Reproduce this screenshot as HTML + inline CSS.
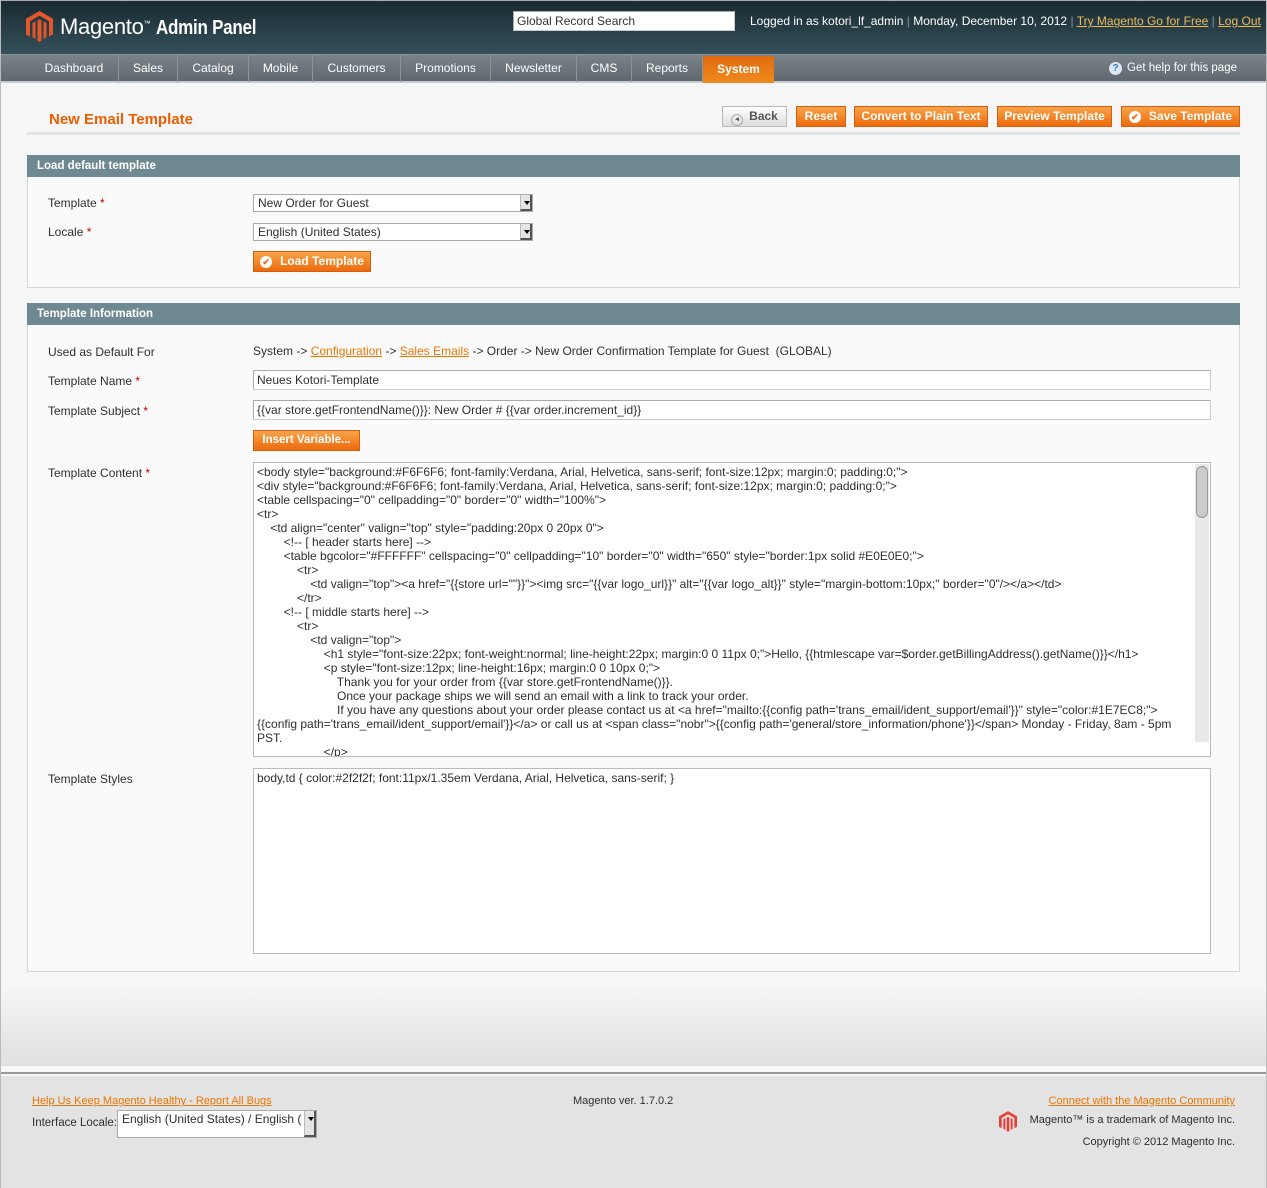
<!DOCTYPE html>
<html><head><meta charset="utf-8"><style>
*{margin:0;padding:0;box-sizing:border-box}
body{width:1267px;height:1188px;position:relative;background:#f6f6f6;font-family:"Liberation Sans",Arial,sans-serif;font-size:12px;color:#2f2f2f;overflow:hidden}
.a{position:absolute}
#hdr{left:0;top:0;width:1267px;height:54px;background:linear-gradient(#1a2a31,#34505a);border-top:1px solid #aab}
#nav{left:0;top:54px;width:1267px;height:29px;background:linear-gradient(#7a8389,#5f686e);border-top:1px solid #8a9499;border-bottom:2px solid #c7cbcd}
#nav span{position:absolute;top:0;height:27px;line-height:27px;color:#fff;font-size:12px;border-right:1px solid #8b9499;text-align:center}
.btn{position:absolute;top:106px;height:21px;background:linear-gradient(#f8a34a,#ec6a0c);border:1px solid #d25e10;color:#fff;font-weight:bold;font-size:12px;line-height:19px;text-align:center}
.sh{left:27px;width:1213px;height:22px;background:#6f8992;color:#fff;font-weight:bold;font-size:11.5px;line-height:22px;padding-left:10px}
.box{left:27px;width:1213px;border:1px solid #d6d6d6;border-top:none;background:#fafafa}
.lbl{left:48px;font-size:12px}
.req{color:#c00}
.inp{background:#fff;border:1px solid #aaa;border-right-color:#ccc;border-bottom-color:#ccc;font-size:12px;padding-left:3px;line-height:16px}
.sel{background:#fff;border:1px solid #aaa;font-size:12px;padding-left:4px;line-height:16px;height:18px}
.sel i{position:absolute;right:0;top:0;width:12px;height:16px;background:#e4e4e4;border-left:1px solid #bbb;border-right:2px solid #555;border-bottom:2px solid #555}
.sel i:after{content:"";position:absolute;left:3px;top:6px;border:3px solid transparent;border-top:4px solid #000}
.ta{background:#fff;border:1px solid #bbb;font-size:12px;line-height:14px;padding:2px 3px;white-space:pre;overflow:hidden}
a{color:#ea7601;text-decoration:underline}
#lb{left:0;top:0;width:1px;height:1188px;background:#bbb}
#rb{right:0;top:0;width:1px;height:1188px;background:#bbb}
</style></head><body>
<div id="hdr" class="a">
<svg class="a" style="left:26px;top:10px" width="27" height="31" viewBox="0 0 27 31"><path d="M13.5 0L27 7.8V23.4L23 25.7V10.2L13.5 4.7 4 10.2V25.7L0 23.4V7.8Z" fill="#e4572a"/><path d="M11.5 9.5L13.5 8.3 15.5 9.5V29.5L13.5 31 11.5 29.5ZM6.5 12L9.5 10.3V28L6.5 26.3ZM17.5 10.3L20.5 12V26.3L17.5 28Z" fill="#e4572a"/></svg>
<div class="a" style="left:60px;top:13px;color:#fff;font-size:22px;letter-spacing:-0.3px;white-space:nowrap">Magento<sup style="font-size:7px">™</sup> <span style="display:inline-block;font-size:20px;font-family:'Liberation Sans Narrow','Liberation Sans',sans-serif;font-weight:bold;transform:scaleX(0.85);transform-origin:left">Admin Panel</span></div>
<div class="a inp" style="left:513px;top:10px;width:222px;height:20px;line-height:18px;font-size:12px;color:#333">Global Record Search</div>
<div class="a" style="left:750px;top:13px;color:#fff;font-size:12px;white-space:nowrap">Logged in as kotori_lf_admin <span style="color:#7f939a">|</span> Monday, December 10, 2012 <span style="color:#7f939a">|</span> <a style="color:#ebbb5c">Try Magento Go for Free</a> <span style="color:#7f939a">|</span> <a style="color:#ebbb5c">Log Out</a></div>
</div>
<div id="nav" class="a">
<span style="left:30px;width:89px">Dashboard</span>
<span style="left:119px;width:59px">Sales</span>
<span style="left:178px;width:71px">Catalog</span>
<span style="left:249px;width:64px">Mobile</span>
<span style="left:313px;width:88px">Customers</span>
<span style="left:401px;width:90px">Promotions</span>
<span style="left:491px;width:86px">Newsletter</span>
<span style="left:577px;width:55px">CMS</span>
<span style="left:632px;width:71px">Reports</span>
<span style="left:703px;width:71px;background:linear-gradient(#e06a10,#f08a1c);font-weight:bold;border-right:none;top:1px">System</span>
<span style="left:1090px;width:147px;border:none;text-align:right;font-size:11.5px"><b style="display:inline-block;width:13px;height:13px;border-radius:50%;background:#dde8f6;color:#3b78c4;font-size:10px;line-height:13px;text-align:center;margin-right:5px">?</b>Get help for this page</span>
</div>
<div class="a" style="left:49px;top:111px;color:#eb5e00;font-size:15px;font-weight:bold">New Email Template</div>
<div class="a" style="left:27px;top:132px;width:1213px;height:3px;background:#e4e4e4"></div>
<div class="btn" style="left:722px;width:65px;background:linear-gradient(#fff,#ddd);border-color:#bbb;color:#555"><span style="display:inline-block;width:12px;height:12px;border-radius:50%;border:1px solid #aaa;font-size:7px;line-height:10px;vertical-align:-1px;margin-right:6px">◂</span>Back</div>
<div class="btn" style="left:796px;width:50px">Reset</div>
<div class="btn" style="left:854px;width:134px">Convert to Plain Text</div>
<div class="btn" style="left:997px;width:115px">Preview Template</div>
<div class="btn" style="left:1121px;width:119px"><span style="display:inline-block;width:12px;height:12px;border-radius:50%;background:#fff;color:#ec6a0c;font-size:9px;line-height:12px;margin-right:8px">✔</span>Save Template</div>

<div class="a sh" style="top:155px">Load default template</div>
<div class="a box" style="top:177px;height:111px"></div>
<div class="a lbl" style="top:196px">Template <span class="req">*</span></div>
<div class="a sel" style="left:253px;top:194px;width:280px">New Order for Guest<i></i></div>
<div class="a lbl" style="top:225px">Locale <span class="req">*</span></div>
<div class="a sel" style="left:253px;top:223px;width:280px">English (United States)<i></i></div>
<div class="btn" style="left:253px;top:251px;width:118px;height:21px"><span style="display:inline-block;width:12px;height:12px;border-radius:50%;background:#fff;color:#ec6a0c;font-size:9px;line-height:12px;margin-right:8px">✔</span>Load Template</div>

<div class="a sh" style="top:303px">Template Information</div>
<div class="a box" style="top:325px;height:647px"></div>
<div class="a lbl" style="top:345px">Used as Default For</div>
<div class="a" style="left:253px;top:344px;font-size:12px">System -&gt; <a>Configuration</a> -&gt; <a>Sales Emails</a> -&gt; Order -&gt; New Order Confirmation Template for Guest &nbsp;(GLOBAL)</div>
<div class="a lbl" style="top:374px">Template Name <span class="req">*</span></div>
<div class="a inp" style="left:253px;top:370px;width:958px;height:20px;line-height:18px;font-size:12px">Neues Kotori-Template</div>
<div class="a lbl" style="top:404px">Template Subject <span class="req">*</span></div>
<div class="a inp" style="left:253px;top:400px;width:958px;height:20px;line-height:18px;font-size:12px">{{var store.getFrontendName()}}: New Order # {{var order.increment_id}}</div>
<div class="btn" style="left:253px;top:430px;width:107px;font-size:11.5px">Insert Variable...</div>
<div class="a lbl" style="top:466px">Template Content <span class="req">*</span></div>
<div class="a ta" style="left:253px;top:462px;width:958px;height:295px">&lt;body style="background:#F6F6F6; font-family:Verdana, Arial, Helvetica, sans-serif; font-size:12px; margin:0; padding:0;"&gt;
&lt;div style="background:#F6F6F6; font-family:Verdana, Arial, Helvetica, sans-serif; font-size:12px; margin:0; padding:0;"&gt;
&lt;table cellspacing="0" cellpadding="0" border="0" width="100%"&gt;
&lt;tr&gt;
    &lt;td align="center" valign="top" style="padding:20px 0 20px 0"&gt;
        &lt;!-- [ header starts here] --&gt;
        &lt;table bgcolor="#FFFFFF" cellspacing="0" cellpadding="10" border="0" width="650" style="border:1px solid #E0E0E0;"&gt;
            &lt;tr&gt;
                &lt;td valign="top"&gt;&lt;a href="{{store url=""}}"&gt;&lt;img src="{{var logo_url}}" alt="{{var logo_alt}}" style="margin-bottom:10px;" border="0"/&gt;&lt;/a&gt;&lt;/td&gt;
            &lt;/tr&gt;
        &lt;!-- [ middle starts here] --&gt;
            &lt;tr&gt;
                &lt;td valign="top"&gt;
                    &lt;h1 style="font-size:22px; font-weight:normal; line-height:22px; margin:0 0 11px 0;"&gt;Hello, {{htmlescape var=$order.getBillingAddress().getName()}}&lt;/h1&gt;
                    &lt;p style="font-size:12px; line-height:16px; margin:0 0 10px 0;"&gt;
                        Thank you for your order from {{var store.getFrontendName()}}.
                        Once your package ships we will send an email with a link to track your order.
                        If you have any questions about your order please contact us at &lt;a href="mailto:{{config path='trans_email/ident_support/email'}}" style="color:#1E7EC8;"&gt;
{{config path='trans_email/ident_support/email'}}&lt;/a&gt; or call us at &lt;span class="nobr"&gt;{{config path='general/store_information/phone'}}&lt;/span&gt; Monday - Friday, 8am - 5pm
PST.
                    &lt;/p&gt;</div>
<div class="a" style="left:1195px;top:464px;width:14px;height:278px;background:#e8e8e8"><div style="margin:2px 1px;height:52px;border:1px solid #999;border-radius:6px;background:#ccc"></div></div>
<div class="a lbl" style="top:772px">Template Styles</div>
<div class="a ta" style="left:253px;top:768px;width:958px;height:186px">body,td { color:#2f2f2f; font:11px/1.35em Verdana, Arial, Helvetica, sans-serif; }</div>

<div class="a" style="left:0;top:985px;width:1267px;height:88px;background:linear-gradient(#f6f6f6,#dedede)"></div>
<div class="a" style="left:0;top:1066px;width:1267px;height:8px;background:#f8f8f8;border-bottom:2px solid #999"></div>
<div class="a" style="left:0;top:1076px;width:1267px;height:112px;background:#e3e3e3"></div>
<div class="a" style="left:32px;top:1095px;font-size:11px"><a>Help Us Keep Magento Healthy - Report All Bugs</a></div>
<div class="a" style="left:32px;top:1117px;font-size:11.5px">Interface Locale:</div>
<div class="a sel" style="left:117px;top:1110px;width:200px;height:28px;font-size:12px">English (United States) / English (<i style="height:26px"></i></div>
<div class="a" style="left:573px;top:1095px;font-size:11px">Magento ver. 1.7.0.2</div>
<div class="a" style="right:32px;top:1095px;font-size:11px"><a>Connect with the Magento Community</a></div>
<svg class="a" style="left:999px;top:1111px" width="18" height="21" viewBox="0 0 27 31"><path d="M13.5 0L27 7.8V23.4L23 25.7V10.2L13.5 4.7 4 10.2V25.7L0 23.4V7.8Z" fill="#e4413a"/><path d="M11.5 9.5L13.5 8.3 15.5 9.5V29.5L13.5 31 11.5 29.5ZM6.5 12L9.5 10.3V28L6.5 26.3ZM17.5 10.3L20.5 12V26.3L17.5 28Z" fill="#e4413a"/></svg>
<div class="a" style="right:32px;top:1114px;font-size:11px">Magento™ is a trademark of Magento Inc.</div>
<div class="a" style="right:32px;top:1136px;font-size:11px">Copyright © 2012 Magento Inc.</div>
<div id="lb" class="a"></div><div id="rb" class="a"></div>
</body></html>
